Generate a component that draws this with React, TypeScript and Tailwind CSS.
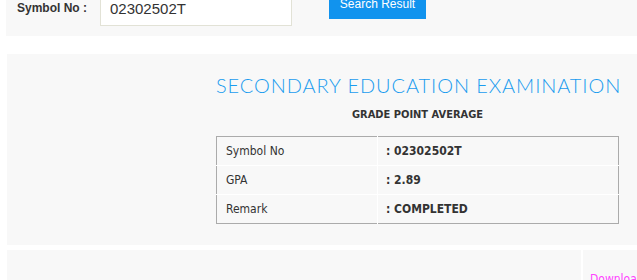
import React from 'react'

const rows = [
  { label: 'Symbol No', value: ': 02302502T' },
  { label: 'GPA', value: ': 2.89' },
  { label: 'Remark', value: ': COMPLETED' },
]

export default function App() {
  return (
    <div className="w-[637px] h-[280px] overflow-hidden bg-white font-['Liberation_Sans',Arial,sans-serif] text-[#333]">
      {/* search bar, page is scrolled so its top is cut off */}
      <div className="ml-[6px] mt-[-20px] h-[56px] bg-[#f8f8f8] pt-[7px] pl-[11px] flex items-start">
        <label className="w-[83px] mt-[14px] text-[12px] leading-[14px] font-bold text-[#333]">Symbol No :</label>
        <input
          className="mt-[3px] w-[192px] h-[36px] bg-white border border-[#e2e2d6] px-[9px] text-[15px] text-[#333] outline-none"
          defaultValue="02302502T"
        />
        <button className="ml-[37px] w-[97px] h-[32px] bg-[#1193ee] text-white text-[12px] pt-[2px]">Search Result</button>
      </div>

      {/* result */}
      <div className="ml-[7px] mt-[18px] h-[191px] bg-[#f8f8f8] pl-[209px]">
        <div className="w-[403px]">
          <h2 className="pt-[19px] text-center font-['Lato',sans-serif] font-light text-[20px] leading-[24px] tracking-[0.9px] text-[#1a9cef] whitespace-nowrap">
            SECONDARY EDUCATION EXAMINATION
          </h2>
          <h4 className="mt-[11px] text-center font-['DejaVu_Sans_Condensed','DejaVu_Sans',sans-serif] font-bold text-[11px] leading-[14px] text-[#333]">
            GRADE POINT AVERAGE
          </h4>
          <table className="mt-[14px] w-full border border-[#ababab] border-collapse font-['DejaVu_Sans_Condensed','DejaVu_Sans',sans-serif] text-[12px] text-[#333]">
            <tbody>
              {rows.map((r, i) => (
                <tr key={r.label} className={i > 0 ? 'border-t border-white' : ''}>
                  <td className="w-[161px] h-[29px] pl-[9px] border-r border-white">{r.label}</td>
                  <td className="h-[29px] pl-[8px] font-bold">{r.value}</td>
                </tr>
              ))}
            </tbody>
          </table>
        </div>
      </div>

      {/* bottom row */}
      <div className="ml-[7px] mt-[5px] flex gap-[2px] h-[40px]">
        <div className="w-[574px] bg-[#f8f8f8]" />
        <div className="flex-1 bg-[#f8f8f8] pl-[7px] pt-[20px] overflow-hidden whitespace-nowrap font-['DejaVu_Sans_Condensed','DejaVu_Sans',sans-serif] text-[12px] text-[#ff44ff]">
          Download
        </div>
      </div>
    </div>
  )
}
